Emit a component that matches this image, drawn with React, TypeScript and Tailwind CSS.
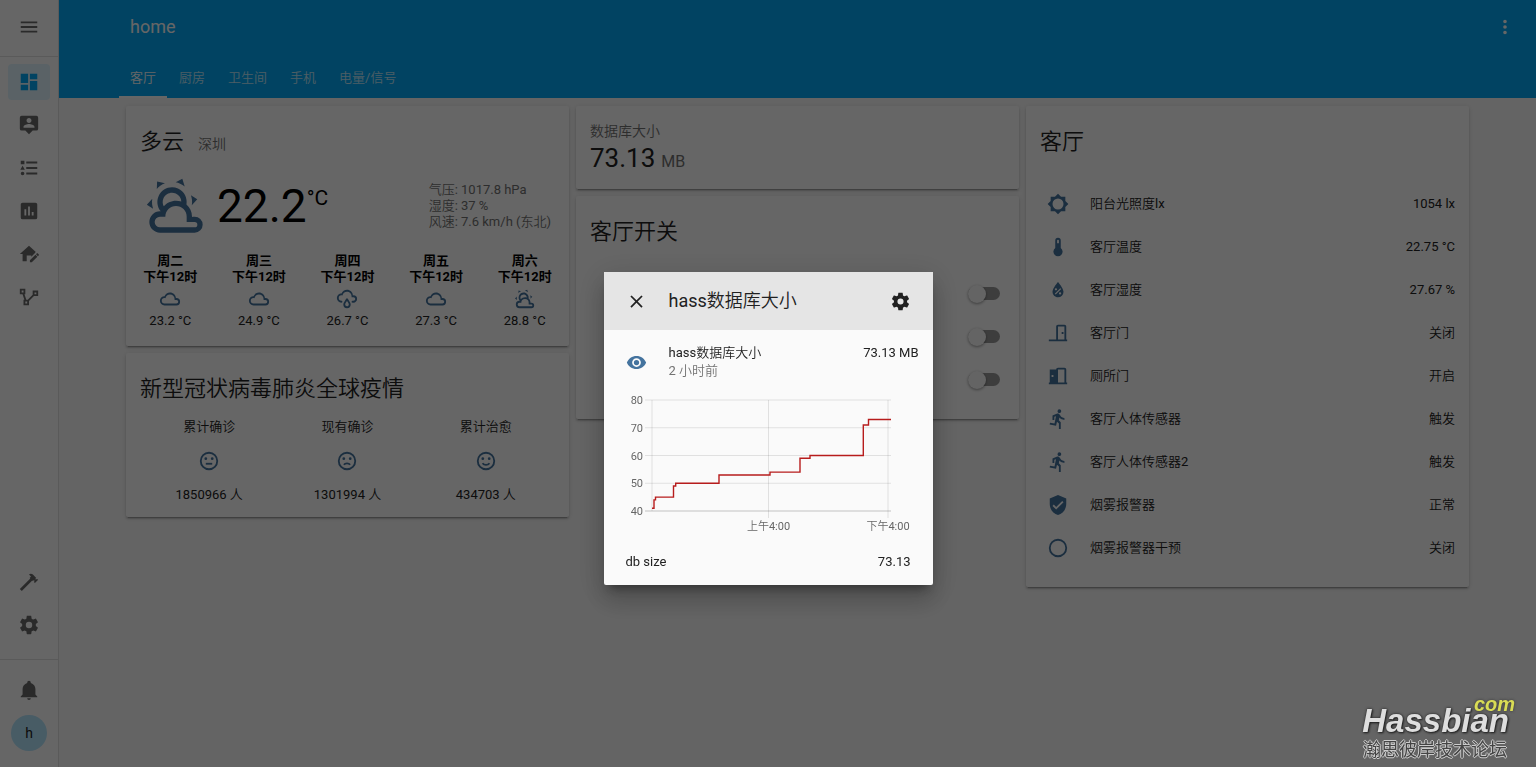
import React from "react";

const icons = {
  menu: "M3,6H21V8H3V6M3,11H21V13H3V11M3,16H21V18H3V16Z",
  dashboard: "M13,3V9H21V3M13,21H21V11H13M3,21H11V15H3M3,13H11V3H3V13Z",
  account:
    "M20,2H4A2,2 0 0,0 2,4V16A2,2 0 0,0 4,18H8L12,22L16,18H20A2,2 0 0,0 22,16V4A2,2 0 0,0 20,2M12,4.3C13.5,4.3 14.7,5.5 14.7,7C14.7,8.5 13.5,9.7 12,9.7C10.5,9.7 9.3,8.5 9.3,7C9.3,5.5 10.5,4.3 12,4.3M18,15H6V14.1C6,12.1 10,11 12,11C14,11 18,12.1 18,14.1V15Z",
  list: "M5,9.5L7.5,14H2.5L5,9.5M3,4H7V8H3V4M5,20A2,2 0 0,0 7,18A2,2 0 0,0 5,16A2,2 0 0,0 3,18A2,2 0 0,0 5,20M9,5V7H21V5H9M9,19H21V17H9V19M9,13H21V11H9V13Z",
  poll: "M17,17H15V13H17M13,17H11V7H13M9,17H7V10H9M19,3H5C3.89,3 3,3.89 3,5V19A2,2 0 0,0 5,21H19A2,2 0 0,0 21,19V5C21,3.89 20.1,3 19,3Z",
  homeEdit:
    "M12,3L2,12H5V20H9.5V13.5H14.5V15L18.8,10.7L19.2,9.5L12,3M21.04,11.13C20.9,11.13 20.76,11.19 20.65,11.3L19.65,12.3L21.7,14.35L22.7,13.35C22.92,13.14 22.92,12.79 22.7,12.58L21.42,11.3C21.31,11.19 21.18,11.13 21.04,11.13M19.07,12.88L13,18.94V21H15.06L21.12,14.93L19.07,12.88Z",
  polyline:
    "M2,3V9H4.95L6.95,15H6V21H12V16.41L17.41,11H22V5H16V9.57L10.59,15H9.06L7.06,9H8V3M4,5H6V7H4M18,7H20V9H18M8,17H10V19H8V17Z",
  hammer:
    "M2,19.63L13.43,8.2L12.72,7.5L14.14,6.07L12,3.89C13.2,2.7 15.09,2.7 16.27,3.89L19.87,7.5L18.45,8.91H21.29L22,9.62L18.45,13.21L17.74,12.5V9.62L16.27,11.04L15.56,10.33L4.13,21.76L2,19.63Z",
  cog: "M12,15.5A3.5,3.5 0 0,1 8.5,12A3.5,3.5 0 0,1 12,8.5A3.5,3.5 0 0,1 15.5,12A3.5,3.5 0 0,1 12,15.5M19.43,12.97C19.47,12.65 19.5,12.33 19.5,12C19.5,11.67 19.47,11.34 19.43,11L21.54,9.37C21.73,9.22 21.78,8.95 21.66,8.73L19.66,5.27C19.54,5.05 19.27,4.96 19.05,5.05L16.56,6.05C16.04,5.66 15.5,5.32 14.87,5.07L14.5,2.42C14.46,2.18 14.25,2 14,2H10C9.75,2 9.54,2.18 9.5,2.42L9.13,5.07C8.5,5.32 7.96,5.66 7.44,6.05L4.95,5.05C4.73,4.96 4.46,5.05 4.34,5.27L2.34,8.73C2.21,8.95 2.27,9.22 2.46,9.37L4.57,11C4.53,11.34 4.5,11.67 4.5,12C4.5,12.33 4.53,12.65 4.57,12.97L2.46,14.63C2.27,14.78 2.21,15.05 2.34,15.27L4.34,18.73C4.46,18.95 4.73,19.03 4.95,18.95L7.44,17.94C7.96,18.34 8.5,18.68 9.13,18.93L9.5,21.58C9.54,21.82 9.75,22 10,22H14C14.25,22 14.46,21.82 14.5,21.58L14.87,18.93C15.5,18.67 16.04,18.34 16.56,17.94L19.05,18.95C19.27,19.03 19.54,18.95 19.66,18.73L21.66,15.27C21.78,15.05 21.73,14.78 21.54,14.63L19.43,12.97Z",
  bell: "M21,19V20H3V19L5,17V11C5,7.9 7.03,5.17 10,4.29C10,4.19 10,4.1 10,4A2,2 0 0,1 12,2A2,2 0 0,1 14,4C14,4.1 14,4.19 14,4.29C16.97,5.17 19,7.9 19,11V17L21,19M14,21A2,2 0 0,1 12,23A2,2 0 0,1 10,21",
  dots: "M12,16A2,2 0 0,1 14,18A2,2 0 0,1 12,20A2,2 0 0,1 10,18A2,2 0 0,1 12,16M12,10A2,2 0 0,1 14,12A2,2 0 0,1 12,14A2,2 0 0,1 10,12A2,2 0 0,1 12,10M12,4A2,2 0 0,1 14,6A2,2 0 0,1 12,8A2,2 0 0,1 10,6A2,2 0 0,1 12,4Z",
  partlyCloudy:
    "M12.74,5.47C15.1,6.5 16.35,9.03 15.92,11.46C17.19,12.56 18,14.19 18,16V16.17C18.31,16.06 18.65,16 19,16A3,3 0 0,1 22,19A3,3 0 0,1 19,22H6A4,4 0 0,1 2,18A4,4 0 0,1 6,14H6.27C5,12.45 4.6,10.24 5.5,8.26C6.72,5.5 9.97,4.24 12.74,5.47M11.93,7.3C10.16,6.5 8.09,7.31 7.31,9.07C6.85,10.09 6.93,11.22 7.41,12.13C8.5,10.83 10.16,10 12,10C12.7,10 13.38,10.12 14,10.34C13.94,9.06 13.18,7.86 11.93,7.3M13.55,3.64C13,3.4 12.45,3.23 11.88,3.12L14.37,1.82L15.27,4.71C14.76,4.29 14.19,3.93 13.55,3.64M6.09,4.44C5.6,4.79 5.17,5.19 4.8,5.63L4.91,2.82L7.87,3.5C7.25,3.71 6.65,4.03 6.09,4.44M18,9.71C17.91,9.12 17.78,8.55 17.59,8L19.97,9.5L17.92,11.73C18.03,11.08 18.05,10.4 18,9.71M3.04,11.3C3.11,11.9 3.24,12.47 3.43,13L1.06,11.5L3.1,9.28C3,9.93 2.97,10.61 3.04,11.3M19,18H16V16A4,4 0 0,0 12,12A4,4 0 0,0 8,16H6A2,2 0 0,0 4,18A2,2 0 0,0 6,20H19A1,1 0 0,0 20,19A1,1 0 0,0 19,18Z",
  cloudy:
    "M6,19A5,5 0 0,1 1,14A5,5 0 0,1 6,9C7,6.65 9.3,5 12,5C15.43,5 18.24,7.66 18.5,11.03L19,11A4,4 0 0,1 23,15A4,4 0 0,1 19,19H6M19,13H17V12A5,5 0 0,0 12,7C9.5,7 7.45,8.82 7.06,11.19C6.73,11.07 6.37,11 6,11A3,3 0 0,0 3,14A3,3 0 0,0 6,17H19A2,2 0 0,0 21,15A2,2 0 0,0 19,13Z",
  rainy:
    "M6,14.03A1,1 0 0,1 7,15.03C7,15.58 6.55,16.03 6,16.03C3.24,16.03 1,13.79 1,11.03C1,8.27 3.24,6.03 6,6.03C7,3.68 9.3,2.03 12,2.03C15.43,2.03 18.24,4.69 18.5,8.06L19,8.03A4,4 0 0,1 23,12.03C23,14.23 21.21,16.03 19,16.03H18C17.45,16.03 17,15.58 17,15.03C17,14.47 17.45,14.03 18,14.03H19A2,2 0 0,0 21,12.03A2,2 0 0,0 19,10.03H17V9.03C17,6.27 14.76,4.03 12,4.03C9.5,4.03 7.45,5.84 7.06,8.21C6.73,8.09 6.37,8.03 6,8.03A3,3 0 0,0 3,11.03A3,3 0 0,0 6,14.03M12,14.15C12.18,14.39 12.37,14.66 12.56,14.94C13,15.56 14,17.03 14,18C14,19.11 13.1,20 12,20A2,2 0 0,1 10,18C10,17.03 11,15.56 11.44,14.94C11.63,14.66 11.82,14.4 12,14.15M12,11.03L11.5,11.59C11.5,11.59 10.65,12.55 9.79,13.81C8.93,15.06 8,16.56 8,18A4,4 0 0,0 12,22A4,4 0 0,0 16,18C16,16.56 15.07,15.06 14.21,13.81C13.35,12.55 12.5,11.59 12.5,11.59",
  brightness:
    "M12,18A6,6 0 0,1 6,12A6,6 0 0,1 12,6A6,6 0 0,1 18,12A6,6 0 0,1 12,18M20,15.31L23.31,12L20,8.69V4H15.31L12,0.69L8.69,4H4V8.69L0.69,12L4,15.31V20H8.69L12,23.31L15.31,20H20V15.31Z",
  thermometer:
    "M15,13V5A3,3 0 0,0 9,5V13A5,5 0 1,0 15,13M12,4A1,1 0 0,1 13,5V8H11V5A1,1 0 0,1 12,4Z",
  humidity:
    "M12,3.25C12,3.25 6,10 6,14C6,17.32 8.69,20 12,20A6,6 0 0,0 18,14C18,10 12,3.25 12,3.25M14.47,9.97L15.53,11.03L9.53,17.03L8.47,15.97M9.75,10A1.25,1.25 0 0,1 11,11.25A1.25,1.25 0 0,1 9.75,12.5A1.25,1.25 0 0,1 8.5,11.25A1.25,1.25 0 0,1 9.75,10M14.25,14.5A1.25,1.25 0 0,1 15.5,15.75A1.25,1.25 0 0,1 14.25,17A1.25,1.25 0 0,1 13,15.75A1.25,1.25 0 0,1 14.25,14.5Z",
  doorClosed:
    "M16,11H18V13H16V11M12,3H19C20.11,3 21,3.89 21,5V19H22V21H2V19H10V5C10,3.89 10.89,3 12,3M12,5V19H19V5H12Z",
  doorOpen:
    "M12,3C10.89,3 10,3.89 10,5H3V19H2V21H22V19H21V5C21,3.89 20.11,3 19,3H12M12,5H19V19H12V5M5,11H7V13H5V11Z",
  run: "M13.49,5.48C14.59,5.48 15.49,4.58 15.49,3.48C15.49,2.38 14.59,1.48 13.49,1.48A2,2 0 0,0 11.49,3.48C11.49,4.58 12.39,5.48 13.49,5.48M9.89,19.38L10.89,14.98L12.99,16.98V22.98H14.99V15.48L12.89,13.48L13.49,10.48C14.79,11.98 16.79,12.98 18.99,12.98V10.98C17.09,10.98 15.49,9.98 14.69,8.58L13.69,6.98C13.29,6.38 12.69,5.98 11.99,5.98C11.69,5.98 11.49,6.08 11.19,6.08L5.99,8.28V12.98H7.99V9.58L9.79,8.88L8.19,16.98L3.29,15.98L2.89,17.98L9.89,19.38Z",
  shield:
    "M10,17L6,13L7.41,11.59L10,14.17L16.59,7.58L18,9M12,1L3,5V11C3,16.55 6.84,21.74 12,23C17.16,21.74 21,16.55 21,11V5L12,1Z",
  circle:
    "M12,20A8,8 0 0,1 4,12A8,8 0 0,1 12,4A8,8 0 0,1 20,12A8,8 0 0,1 12,20M12,2A10,10 0 0,0 2,12A10,10 0 0,0 12,22A10,10 0 0,0 22,12A10,10 0 0,0 12,2Z",
  eye: "M12,9A3,3 0 0,0 9,12A3,3 0 0,0 12,15A3,3 0 0,0 15,12A3,3 0 0,0 12,9M12,17A5,5 0 0,1 7,12A5,5 0 0,1 12,7A5,5 0 0,1 17,12A5,5 0 0,1 12,17M12,4.5C7,4.5 2.73,7.61 1,12C2.73,16.39 7,19.5 12,19.5C17,19.5 21.27,16.39 23,12C21.27,7.61 17,4.5 12,4.5Z",
  close:
    "M19,6.41L17.59,5L12,10.59L6.41,5L5,6.41L10.59,12L5,17.59L6.41,19L12,13.41L17.59,19L19,17.59L13.41,12L19,6.41Z",
};

type IconName = keyof typeof icons;

function Icon({ name, className = "size-[22px]" }: { name: IconName; className?: string }) {
  return (
    <svg viewBox="0 0 24 24" className={`shrink-0 ${className}`} fill="currentColor" aria-hidden="true">
      <path d={icons[name]} />
    </svg>
  );
}

function Face({ mouth }: { mouth: string }) {
  return (
    <svg viewBox="0 0 24 24" className="size-[22px] text-[#44739e]" fill="none" stroke="currentColor" strokeWidth="2" aria-hidden="true">
      <circle cx="12" cy="12" r="9" />
      <circle cx="8.5" cy="9.5" r="1.5" fill="currentColor" stroke="none" />
      <circle cx="15.5" cy="9.5" r="1.5" fill="currentColor" stroke="none" />
      <path d={mouth} />
    </svg>
  );
}

function Card({ className = "", children }: { className?: string; children: React.ReactNode }) {
  return (
    <section
      className={`rounded-xs bg-white shadow-[0_2px_2px_rgba(0,0,0,0.14),0_1px_5px_rgba(0,0,0,0.12),0_3px_1px_-2px_rgba(0,0,0,0.2)] ${className}`}
    >
      {children}
    </section>
  );
}

const sideTop: { name: IconName; label: string }[] = [
  { name: "account", label: "地图" },
  { name: "list", label: "日志" },
  { name: "poll", label: "历史" },
  { name: "homeEdit", label: "编辑" },
  { name: "polyline", label: "流程" },
];

function SideLink({ name, label, active = false }: { name: IconName; label: string; active?: boolean }) {
  return (
    <a
      href="#"
      aria-label={label}
      className={`flex h-9 items-center justify-center rounded ${active ? "bg-[#03a9f4]/12 text-[#03a9f4]" : "text-[#6a6a6a]"}`}
    >
      <Icon name={name} />
    </a>
  );
}

function Sidebar() {
  return (
    <aside className="sticky top-0 flex h-screen w-[59px] shrink-0 flex-col border-r border-[#e0e0e0] bg-white">
      <button aria-label="菜单" className="flex h-[57px] shrink-0 items-center justify-center border-b border-[#e0e0e0] pb-0.5 text-[#6a6a6a]">
        <Icon name="menu" />
      </button>
      <nav className="flex flex-1 flex-col gap-[7px] px-2 pt-[7px] pb-4">
        <SideLink name="dashboard" label="概览" active />
        {sideTop.map((i) => (
          <SideLink key={i.name} {...i} />
        ))}
        <div className="flex-1" />
        <SideLink name="hammer" label="开发者工具" />
        <SideLink name="cog" label="配置" />
      </nav>
      <div className="flex flex-col gap-[7px] border-t border-[#e0e0e0] px-2 pt-3 pb-4">
        <SideLink name="bell" label="通知" />
        <a href="#" className="mx-auto flex size-9 items-center justify-center rounded-full bg-[#b3e5fc] text-sm text-[#212121]">
          h
        </a>
      </div>
    </aside>
  );
}

const tabs = ["客厅", "厨房", "卫生间", "手机", "电量/信号"];

function Header() {
  return (
    <header className="bg-[#03a9f4] text-white">
      <div className="flex h-[54px] items-center justify-between pr-5 pl-[71px]">
        <h1 className="text-lg">home</h1>
        <button aria-label="更多">
          <Icon name="dots" />
        </button>
      </div>
      <nav className="flex h-11 gap-px pl-[60px]">
        {tabs.map((t, i) => (
          <a
            key={t}
            href="#"
            className={`flex items-center border-b-2 px-[11px] pt-1.5 text-[13px] ${i === 0 ? "border-white" : "border-transparent text-white/75"}`}
          >
            {t}
          </a>
        ))}
      </nav>
    </header>
  );
}

const forecast: { day: string; icon: IconName; temp: string }[] = [
  { day: "周二", icon: "cloudy", temp: "23.2 °C" },
  { day: "周三", icon: "cloudy", temp: "24.9 °C" },
  { day: "周四", icon: "rainy", temp: "26.7 °C" },
  { day: "周五", icon: "cloudy", temp: "27.3 °C" },
  { day: "周六", icon: "partlyCloudy", temp: "28.8 °C" },
];

function WeatherCard() {
  return (
    <Card className="pt-5 pb-[17px]">
      <div className="flex items-baseline gap-3.5 px-3.5">
        <h2 className="text-[22px] leading-8">多云</h2>
        <span className="text-sm text-[#727272]">深圳</span>
      </div>
      <div className="mt-4 flex h-16 items-center px-[18px]">
        <Icon name="partlyCloudy" className="size-16 text-[#44739e]" />
        <div className="ml-[9px] flex items-start text-black">
          <span className="text-[46px] leading-[48px]">22.2</span>
          <span className="text-[21px] leading-8">°C</span>
        </div>
        <div className="ml-auto text-[13px] leading-4 text-[#727272]">
          <div>气压: 1017.8 hPa</div>
          <div>湿度: 37 %</div>
          <div>风速: 7.6 km/h (东北)</div>
        </div>
      </div>
      <div className="mt-[15px] grid grid-cols-5 text-center text-[13px] leading-4">
        {forecast.map((f) => (
          <div key={f.day} className="flex flex-col items-center gap-[3px]">
            <div className="font-['Roboto','Noto_Sans_CJK_SC',sans-serif] font-bold text-black">
              {f.day}
              <br />
              下午12时
            </div>
            <Icon name={f.icon} className="size-[22px] text-[#44739e]" />
            <div>{f.temp}</div>
          </div>
        ))}
      </div>
    </Card>
  );
}

const epidemic = [
  { label: "累计确诊", mouth: "M8.5,15H15.5", value: "1850966 人" },
  { label: "现有确诊", mouth: "M8.6,16.2C9.5,14.9 10.7,14.6 12,14.6C13.3,14.6 14.5,14.9 15.4,16.2", value: "1301994 人" },
  { label: "累计治愈", mouth: "M8.2,14.4C9.2,15.8 10.6,16.3 12,16.3C13.4,16.3 14.8,15.8 15.8,14.4", value: "434703 人" },
];

function EpidemicCard() {
  return (
    <Card className="px-3.5 pt-5 pb-3.5">
      <h2 className="text-[22px] leading-8">新型冠状病毒肺炎全球疫情</h2>
      <div className="mt-3.5 grid grid-cols-3 text-[13px] leading-4">
        {epidemic.map((e) => (
          <div key={e.label} className="flex flex-col items-center gap-[15px]">
            <div>{e.label}</div>
            <Face mouth={e.mouth} />
            <div>{e.value}</div>
          </div>
        ))}
      </div>
    </Card>
  );
}

function Toggle({ label }: { label: string }) {
  return (
    <label className="flex h-[43px] items-center justify-end">
      <input type="checkbox" role="switch" aria-label={label} className="peer sr-only" />
      <span className="flex h-[13px] w-8 items-center rounded-full bg-[#9a9a9a]">
        <span className="size-[18px] rounded-full bg-[#fafafa] shadow-[0_1px_3px_rgba(0,0,0,0.4)]" />
      </span>
    </label>
  );
}

const sensors: { icon: IconName; name: string; state: string }[] = [
  { icon: "brightness", name: "阳台光照度lx", state: "1054 lx" },
  { icon: "thermometer", name: "客厅温度", state: "22.75 °C" },
  { icon: "humidity", name: "客厅湿度", state: "27.67 %" },
  { icon: "doorClosed", name: "客厅门", state: "关闭" },
  { icon: "doorOpen", name: "厕所门", state: "开启" },
  { icon: "run", name: "客厅人体传感器", state: "触发" },
  { icon: "run", name: "客厅人体传感器2", state: "触发" },
  { icon: "shield", name: "烟雾报警器", state: "正常" },
  { icon: "circle", name: "烟雾报警器干预", state: "关闭" },
];

function SensorCard() {
  return (
    <Card className="px-3.5 pt-5 pb-[18px]">
      <h2 className="text-[22px] leading-8">客厅</h2>
      <ul className="mt-6 text-[13px]">
        {sensors.map((s) => (
          <li key={s.name} className="flex h-[43px] items-center pl-[7px]">
            <Icon name={s.icon} className="size-[22px] text-[#44739e]" />
            <span className="ml-[21px] flex-1">{s.name}</span>
            <span>{s.state}</span>
          </li>
        ))}
      </ul>
    </Card>
  );
}

const CHART_LEFT = 48;
const yFor = (v: number) => 119 - (v - 40) * 2.775;

// Each entry is the x position at which the database grew to the given size.
const steps: [number, number][] = [
  [50, 44],
  [51.5, 45],
  [69.5, 49],
  [71.7, 50],
  [115, 53],
  [166, 54],
  [196, 59],
  [206, 60],
  [259.3, 71],
  [264.5, 73],
];

const linePath =
  `M${CHART_LEFT},${yFor(41)}` + steps.map(([x, v]) => `H${x}V${yFor(v)}`).join("") + "H287";

function HistoryChart() {
  return (
    <svg viewBox="0 0 329 150" className="block w-full" role="img" aria-label="db size">
      <g stroke="#000" strokeOpacity="0.1">
        {[80, 70, 60, 50].map((v) => (
          <path key={v} d={`M41,${yFor(v)}H287`} />
        ))}
        <path d={`M41,${yFor(40)}H287`} strokeOpacity="0.22" />
        <path d="M48,8V119M164.5,8V126M284,8V126" />
      </g>
      <g className="fill-[#666] text-[11px]">
        {[80, 70, 60, 50, 40].map((v) => (
          <text key={v} x="39" y={yFor(v) + 4} textAnchor="end">
            {v}
          </text>
        ))}
        <text x="164.5" y="138" textAnchor="middle">
          上午4:00
        </text>
        <text x="284" y="138" textAnchor="middle">
          下午4:00
        </text>
      </g>
      <path d={linePath} fill="none" stroke="#b71c1c" strokeWidth="1.4" />
    </svg>
  );
}

function HistoryDialog() {
  return (
    <div
      role="dialog"
      aria-modal="true"
      aria-labelledby="dialog-title"
      className="w-[329px] rounded-xs bg-[#fafafa] pb-3.5 shadow-[0_16px_24px_2px_rgba(0,0,0,0.14),0_6px_30px_5px_rgba(0,0,0,0.12),0_8px_10px_-5px_rgba(0,0,0,0.4)]"
    >
      <div className="flex h-[58px] items-center bg-[#e5e5e5] px-[22px]">
        <button aria-label="关闭">
          <Icon name="close" className="size-[21px]" />
        </button>
        <h2 id="dialog-title" className="ml-[22px] flex-1 text-lg">
          hass数据库大小
        </h2>
        <button aria-label="设置">
          <Icon name="cog" className="size-[21px]" />
        </button>
      </div>
      <div className="flex h-[62px] items-center pt-0.5 pr-3.5 pl-[22px] text-[13px] leading-[18px]">
        <Icon name="eye" className="size-[21px] text-[#44739e]" />
        <div className="ml-[22px] flex-1">
          <div>hass数据库大小</div>
          <div className="text-[#727272]">2 小时前</div>
        </div>
        <div className="mb-[18px]">73.13 MB</div>
      </div>
      <HistoryChart />
      <div className="mt-[11px] flex justify-between px-[22px] text-[13px] leading-[18px]">
        <span>db size</span>
        <span>73.13</span>
      </div>
    </div>
  );
}

function Watermark() {
  return (
    <div className="pointer-events-none fixed right-[21px] bottom-[5px] flex flex-col items-end font-['Liberation_Sans','Noto_Sans_CJK_SC',sans-serif]">
      <div className="text-xl leading-4 font-bold text-[#d9dc55] italic [text-shadow:0_0_3px_#333]">com</div>
      <div className="-mt-[7px] pr-1.5 text-[33px] leading-8 font-bold text-[#dedede] italic [text-shadow:0_0_3px_#222,1px_1px_2px_#222]">
        Hassbian
      </div>
      <div className="mt-px pr-2 text-lg leading-6 text-[#444] [text-shadow:1px_0_#ccc,-1px_0_#ccc,0_1px_#ccc,0_-1px_#ccc]">
        瀚思彼岸技术论坛
      </div>
    </div>
  );
}

export default function App() {
  return (
    <div className="flex min-h-screen bg-[#fafafa] font-['Roboto','Noto_Sans_CJK_SC_DemiLight','Noto_Sans_CJK_SC',sans-serif] text-[#212121]">
      <Sidebar />
      <div className="min-w-0 flex-1">
        <Header />
        <main className="flex items-start justify-center gap-[7px] px-2 pt-2">
          <div className="flex max-w-[443px] flex-1 flex-col gap-[7px]">
            <WeatherCard />
            <EpidemicCard />
          </div>
          <div className="flex max-w-[443px] flex-1 flex-col gap-[7px]">
            <Card className="px-3.5 pt-4 pb-[15px]">
              <div className="text-sm leading-[18px] text-[#727272]">数据库大小</div>
              <div className="mt-0.5 flex h-8 items-baseline gap-1.5 leading-8">
                <span className="text-[26px]">73.13</span>
                <span className="text-base text-[#727272]">MB</span>
              </div>
            </Card>
            <Card className="px-3.5 pt-5 pb-[18px]">
              <h2 className="text-[22px] leading-8">客厅开关</h2>
              <div className="mt-6 pr-[5px]">
                <Toggle label="开关一" />
                <Toggle label="开关二" />
                <Toggle label="开关三" />
              </div>
            </Card>
          </div>
          <div className="max-w-[443px] flex-1">
            <SensorCard />
          </div>
        </main>
      </div>
      <div className="fixed inset-0 flex items-center justify-center bg-black/60 pt-[90px]">
        <HistoryDialog />
      </div>
      <Watermark />
    </div>
  );
}
